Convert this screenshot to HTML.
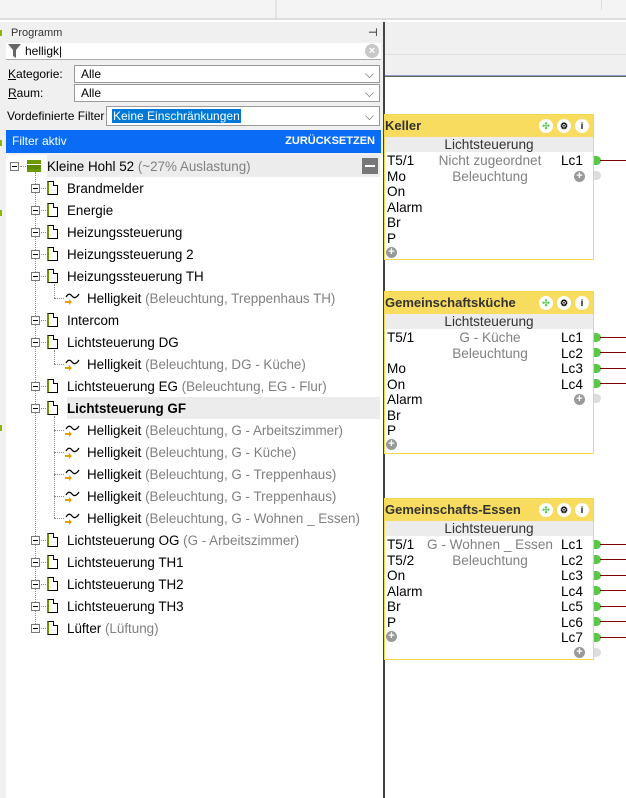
<!DOCTYPE html><html><head><meta charset="utf-8"><style>
*{margin:0;padding:0;box-sizing:border-box}
body{width:626px;height:798px;position:relative;overflow:hidden;background:#fff;font-family:"Liberation Sans",Arial,sans-serif;font-size:13px;color:#000}
.a{position:absolute;white-space:nowrap}
.g{color:#808080}
.row{position:absolute;height:20px;line-height:20px;white-space:nowrap;font-size:13.4px;margin-top:1px}
.doc{position:absolute;width:11px;height:14px;border:1px solid #000;border-left:2px solid #6a9a00;background:#fff}
.doc:after{content:"";position:absolute;right:-1px;top:-1px;width:4px;height:4px;background:#fff;border-left:1px solid #000;border-bottom:1px solid #000}
.exp{position:absolute;width:9px;height:9px;border:1px solid #777;background:#fff}
.exp:after{content:"";position:absolute;left:1px;top:3px;width:5px;height:1px;background:#000}
.dh{position:absolute;border-top:1px dotted #888;height:0}
.dv{position:absolute;border-left:1px dotted #888;width:0}
.blk{position:absolute;border:1px solid #f5d94a;background:#fff;font-size:13.6px}
.bh{height:22px;background:#f7dc5f;font-weight:bold;line-height:22px;color:#333;position:relative;font-size:13px}
.bs{height:15px;background:#ececec;text-align:center;line-height:15px;color:#333}
.ic{position:absolute;top:4px;width:14px;height:14px;border-radius:50%;background:#fff;font-size:9px;line-height:14px;text-align:center;color:#000}
.pl{position:absolute;width:11px;height:11px;border-radius:50%;background:#999;color:#fff;font-size:11px;line-height:11px;text-align:center;font-weight:bold}
.cn{position:absolute;width:7px;height:9px;background:#5cc84a;border-radius:0 5px 5px 0}
.ln{position:absolute;height:1px;background:#7a0000;width:26px}
.t{position:absolute;line-height:15.5px}
</style></head><body>
<div class="a" style="left:0;top:0;width:626px;height:20px;background:#f4f4f4;border-bottom:2px solid #ddd"></div>
<div class="a" style="left:275px;top:0;width:2px;height:18px;background:#e4e4e4"></div>
<div class="a" style="left:601px;top:0;width:1px;height:10px;background:#ddd"></div>
<div class="a" style="left:384px;top:22px;width:242px;height:55px;background:#f0f0f0;border-bottom:2px solid #666"></div>
<div class="a" style="left:384px;top:54px;width:242px;height:1px;background:#e0e0e0"></div>
<div class="a" style="left:384px;top:75px;width:242px;height:1px;background:#8aa0c8"></div>
<div class="a" style="left:0;top:22px;width:6px;height:776px;background:#f0f0f0"></div>
<div class="a" style="left:0;top:30px;width:2px;height:6px;background:#8ab800"></div>
<div class="a" style="left:0;top:140px;width:2px;height:6px;background:#8ab800"></div>
<div class="a" style="left:0;top:210px;width:2px;height:6px;background:#8ab800"></div>
<div class="a" style="left:0;top:425px;width:2px;height:6px;background:#8ab800"></div>
<div class="a" style="left:6px;top:22px;width:377px;height:133px;background:#f0f0f0"></div>
<div class="a" style="left:383px;top:22px;width:2px;height:776px;background:#444"></div>
<div class="a" style="left:11px;top:27px;font-size:11px;color:#333">Programm</div>
<div class="a" style="left:368px;top:26px;font-size:11px">⊣</div>
<div class="a" style="left:6px;top:43px;width:375px;height:17px;background:#fff;border-bottom:1px solid #aaa"></div>
<svg class="a" style="left:8px;top:44px" width="13" height="14"><path d="M0 0H13L8 6V14L5 12V6Z" fill="#666"/></svg>
<div class="a" style="left:25px;top:43px;font-size:12px;line-height:16px">helligk|</div>
<div class="a" style="left:365px;top:44px;width:14px;height:14px;border-radius:50%;background:#c8c8c8;color:#fff;font-size:11px;line-height:14px;text-align:center;font-weight:bold">×</div>
<div class="a" style="left:8px;top:67px;font-size:12px"><u>K</u>ategorie:</div>
<div class="a" style="left:74px;top:65px;width:306px;height:18px;background:#fff;border:1px solid #999;font-size:12px;line-height:16px;padding-left:6px">Alle<span style="position:absolute;right:5px;color:#555">⌵</span></div>
<div class="a" style="left:8px;top:86px;font-size:12px"><u>R</u>aum:</div>
<div class="a" style="left:74px;top:84px;width:306px;height:18px;background:#fff;border:1px solid #999;font-size:12px;line-height:16px;padding-left:6px">Alle<span style="position:absolute;right:5px;color:#555">⌵</span></div>
<div class="a" style="left:7px;top:109px;font-size:12px">Vordefinierte Filter</div>
<div class="a" style="left:106px;top:106px;width:274px;height:20px;background:#fff;border:1px solid #999;font-size:12px;line-height:18px;padding-left:5px"><span style="background:#0078d7;color:#fff;padding:0 1px">Keine Einschränkungen</span><span style="position:absolute;right:5px;color:#555">⌵</span></div>
<div class="a" style="left:6px;top:130px;width:375px;height:23px;background:#0a6cf5;color:#fff;font-size:12px;line-height:23px;padding-left:6px">Filter aktiv<span style="position:absolute;right:6px;font-weight:bold;font-size:11px">ZURÜCKSETZEN</span></div>
<div class="a" style="left:47px;top:155px;width:333px;height:22px;background:#ececec"></div>
<div class="a" style="left:362px;top:158px;width:16px;height:16px;background:#777"><div style="position:absolute;left:3px;top:7px;width:10px;height:2px;background:#fff"></div></div>
<div class="exp" style="left:10px;top:162px"></div>
<div class="dh" style="left:20px;top:166px;width:6px"></div>
<div class="a" style="left:27px;top:160px;width:14px;height:4px;background:#6a9a00"></div>
<div class="a" style="left:27px;top:165px;width:14px;height:4px;background:#5a8a00"></div>
<div class="a" style="left:27px;top:169px;width:14px;height:3px;background:#6a9a00"></div>
<div class="row" style="left:47px;top:156px">Kleine Hohl 52 <span class="g">(~27% Auslastung)</span></div>
<div class="dv" style="left:35px;top:172px;height:456px"></div>

<div class="exp" style="left:31px;top:184px"></div><div class="dh" style="left:41px;top:188px;width:5px"></div><div class="doc" style="left:47px;top:181px"></div><div class="row" style="left:67px;top:178px">Brandmelder</div>
<div class="exp" style="left:31px;top:206px"></div><div class="dh" style="left:41px;top:210px;width:5px"></div><div class="doc" style="left:47px;top:203px"></div><div class="row" style="left:67px;top:200px">Energie</div>
<div class="exp" style="left:31px;top:228px"></div><div class="dh" style="left:41px;top:232px;width:5px"></div><div class="doc" style="left:47px;top:225px"></div><div class="row" style="left:67px;top:222px">Heizungssteuerung</div>
<div class="exp" style="left:31px;top:250px"></div><div class="dh" style="left:41px;top:254px;width:5px"></div><div class="doc" style="left:47px;top:247px"></div><div class="row" style="left:67px;top:244px">Heizungssteuerung 2</div>
<div class="exp" style="left:31px;top:272px"></div><div class="dh" style="left:41px;top:276px;width:5px"></div><div class="doc" style="left:47px;top:269px"></div><div class="row" style="left:67px;top:266px">Heizungssteuerung TH</div>
<div class="dv" style="left:54px;top:284px;height:14px"></div><div class="dh" style="left:54px;top:298px;width:10px"></div>
<svg class="a" style="left:64px;top:291px" width="18" height="14"><path d="M2 6Q5 1 8 5T15 3" fill="none" stroke="#000" stroke-width="1.2"/><path d="M1 10H5V8L8 11L5 14V12H1Z" fill="#e8a000"/></svg>
<div class="row" style="left:87px;top:288px">Helligkeit <span class="g">(Beleuchtung, Treppenhaus TH)</span></div>
<div class="exp" style="left:31px;top:316px"></div><div class="dh" style="left:41px;top:320px;width:5px"></div><div class="doc" style="left:47px;top:313px"></div><div class="row" style="left:67px;top:310px">Intercom</div>
<div class="exp" style="left:31px;top:338px"></div><div class="dh" style="left:41px;top:342px;width:5px"></div><div class="doc" style="left:47px;top:335px"></div><div class="row" style="left:67px;top:332px">Lichtsteuerung DG</div>
<div class="dv" style="left:54px;top:350px;height:14px"></div><div class="dh" style="left:54px;top:364px;width:10px"></div>
<svg class="a" style="left:64px;top:357px" width="18" height="14"><path d="M2 6Q5 1 8 5T15 3" fill="none" stroke="#000" stroke-width="1.2"/><path d="M1 10H5V8L8 11L5 14V12H1Z" fill="#e8a000"/></svg>
<div class="row" style="left:87px;top:354px">Helligkeit <span class="g">(Beleuchtung, DG - Küche)</span></div>
<div class="exp" style="left:31px;top:382px"></div><div class="dh" style="left:41px;top:386px;width:5px"></div><div class="doc" style="left:47px;top:379px"></div><div class="row" style="left:67px;top:376px">Lichtsteuerung EG <span class="g">(Beleuchtung, EG - Flur)</span></div>
<div class="a" style="left:67px;top:397px;width:313px;height:22px;background:#ececec"></div>
<div class="exp" style="left:31px;top:404px"></div><div class="dh" style="left:41px;top:408px;width:5px"></div><div class="doc" style="left:47px;top:401px"></div><div class="row" style="left:67px;top:398px;font-weight:bold">Lichtsteuerung GF</div>
<div class="dv" style="left:54px;top:416px;height:102px"></div>
<div class="dh" style="left:54px;top:430px;width:10px"></div><svg class="a" style="left:64px;top:423px" width="18" height="14"><path d="M2 6Q5 1 8 5T15 3" fill="none" stroke="#000" stroke-width="1.2"/><path d="M1 10H5V8L8 11L5 14V12H1Z" fill="#e8a000"/></svg><div class="row" style="left:87px;top:420px">Helligkeit <span class="g">(Beleuchtung, G - Arbeitszimmer)</span></div>
<div class="dh" style="left:54px;top:452px;width:10px"></div><svg class="a" style="left:64px;top:445px" width="18" height="14"><path d="M2 6Q5 1 8 5T15 3" fill="none" stroke="#000" stroke-width="1.2"/><path d="M1 10H5V8L8 11L5 14V12H1Z" fill="#e8a000"/></svg><div class="row" style="left:87px;top:442px">Helligkeit <span class="g">(Beleuchtung, G - Küche)</span></div>
<div class="dh" style="left:54px;top:474px;width:10px"></div><svg class="a" style="left:64px;top:467px" width="18" height="14"><path d="M2 6Q5 1 8 5T15 3" fill="none" stroke="#000" stroke-width="1.2"/><path d="M1 10H5V8L8 11L5 14V12H1Z" fill="#e8a000"/></svg><div class="row" style="left:87px;top:464px">Helligkeit <span class="g">(Beleuchtung, G - Treppenhaus)</span></div>
<div class="dh" style="left:54px;top:496px;width:10px"></div><svg class="a" style="left:64px;top:489px" width="18" height="14"><path d="M2 6Q5 1 8 5T15 3" fill="none" stroke="#000" stroke-width="1.2"/><path d="M1 10H5V8L8 11L5 14V12H1Z" fill="#e8a000"/></svg><div class="row" style="left:87px;top:486px">Helligkeit <span class="g">(Beleuchtung, G - Treppenhaus)</span></div>
<div class="dh" style="left:54px;top:518px;width:10px"></div><svg class="a" style="left:64px;top:511px" width="18" height="14"><path d="M2 6Q5 1 8 5T15 3" fill="none" stroke="#000" stroke-width="1.2"/><path d="M1 10H5V8L8 11L5 14V12H1Z" fill="#e8a000"/></svg><div class="row" style="left:87px;top:508px">Helligkeit <span class="g">(Beleuchtung, G - Wohnen _ Essen)</span></div>
<div class="exp" style="left:31px;top:536px"></div><div class="dh" style="left:41px;top:540px;width:5px"></div><div class="doc" style="left:47px;top:533px"></div><div class="row" style="left:67px;top:530px">Lichtsteuerung OG <span class="g">(G - Arbeitszimmer)</span></div>
<div class="exp" style="left:31px;top:558px"></div><div class="dh" style="left:41px;top:562px;width:5px"></div><div class="doc" style="left:47px;top:555px"></div><div class="row" style="left:67px;top:552px">Lichtsteuerung TH1</div>
<div class="exp" style="left:31px;top:580px"></div><div class="dh" style="left:41px;top:584px;width:5px"></div><div class="doc" style="left:47px;top:577px"></div><div class="row" style="left:67px;top:574px">Lichtsteuerung TH2</div>
<div class="exp" style="left:31px;top:602px"></div><div class="dh" style="left:41px;top:606px;width:5px"></div><div class="doc" style="left:47px;top:599px"></div><div class="row" style="left:67px;top:596px">Lichtsteuerung TH3</div>
<div class="exp" style="left:31px;top:624px"></div><div class="dh" style="left:41px;top:628px;width:5px"></div><div class="doc" style="left:47px;top:621px"></div><div class="row" style="left:67px;top:618px">Lüfter <span class="g">(Lüftung)</span></div>

<div class="blk" style="left:384px;top:114px;width:210px;height:146px">
<div class="bh">Keller<div class="ic" style="left:154px;color:#5c5">✣</div><div class="ic" style="left:172px">⚙</div><div class="ic" style="left:190px;font-weight:bold">i</div></div>
<div class="bs">Lichtsteuerung</div>
<div class="t" style="left:2px;top:38px">T5/1<br>Mo<br>On<br>Alarm<br>Br<br>P</div>
<div class="t g" style="left:40px;top:38px;width:130px;text-align:center">Nicht zugeordnet<br>Beleuchtung</div>
<div class="t" style="left:176px;top:38px">Lc1</div>
<div class="pl" style="left:189px;top:56px">+</div><div class="pl" style="left:1px;top:132px">+</div>
</div>
<div class="cn" style="left:594px;top:156px"></div><div class="ln" style="left:600px;top:160px"></div>
<div class="cn" style="left:594px;top:171px;background:#ddd"></div>
<div class="blk" style="left:384px;top:291px;width:210px;height:163px">
<div class="bh">Gemeinschaftsküche<div class="ic" style="left:154px;color:#5c5">✣</div><div class="ic" style="left:172px">⚙</div><div class="ic" style="left:190px;font-weight:bold">i</div></div>
<div class="bs">Lichtsteuerung</div>
<div class="t" style="left:2px;top:38px">T5/1<br><br>Mo<br>On<br>Alarm<br>Br<br>P</div>
<div class="t g" style="left:40px;top:38px;width:130px;text-align:center">G - Küche<br>Beleuchtung</div>
<div class="t" style="left:176px;top:38px">Lc1<br>Lc2<br>Lc3<br>Lc4</div>
<div class="pl" style="left:189px;top:102px">+</div><div class="pl" style="left:1px;top:147px">+</div>
</div>
<div class="cn" style="left:594px;top:333px"></div><div class="ln" style="left:600px;top:337px"></div>
<div class="cn" style="left:594px;top:348px"></div><div class="ln" style="left:600px;top:352px"></div>
<div class="cn" style="left:594px;top:364px"></div><div class="ln" style="left:600px;top:368px"></div>
<div class="cn" style="left:594px;top:379px"></div><div class="ln" style="left:600px;top:383px"></div>
<div class="cn" style="left:594px;top:394px;background:#ddd"></div>
<div class="blk" style="left:384px;top:498px;width:210px;height:162px">
<div class="bh">Gemeinschafts-Essen<div class="ic" style="left:154px;color:#5c5">✣</div><div class="ic" style="left:172px">⚙</div><div class="ic" style="left:190px;font-weight:bold">i</div></div>
<div class="bs">Lichtsteuerung</div>
<div class="t" style="left:2px;top:38px">T5/1<br>T5/2<br>On<br>Alarm<br>Br<br>P</div>
<div class="t g" style="left:35px;top:38px;width:140px;text-align:center">G - Wohnen _ Essen<br>Beleuchtung</div>
<div class="t" style="left:176px;top:38px">Lc1<br>Lc2<br>Lc3<br>Lc4<br>Lc5<br>Lc6<br>Lc7</div>
<div class="pl" style="left:1px;top:132px">+</div><div class="pl" style="left:189px;top:148px">+</div>
</div>
<div class="cn" style="left:594px;top:540px"></div><div class="ln" style="left:600px;top:544px"></div>
<div class="cn" style="left:594px;top:555px"></div><div class="ln" style="left:600px;top:559px"></div>
<div class="cn" style="left:594px;top:571px"></div><div class="ln" style="left:600px;top:575px"></div>
<div class="cn" style="left:594px;top:586px"></div><div class="ln" style="left:600px;top:590px"></div>
<div class="cn" style="left:594px;top:602px"></div><div class="ln" style="left:600px;top:606px"></div>
<div class="cn" style="left:594px;top:617px"></div><div class="ln" style="left:600px;top:621px"></div>
<div class="cn" style="left:594px;top:633px"></div><div class="ln" style="left:600px;top:637px"></div>
<div class="cn" style="left:594px;top:648px;background:#ddd"></div>
</body></html>
